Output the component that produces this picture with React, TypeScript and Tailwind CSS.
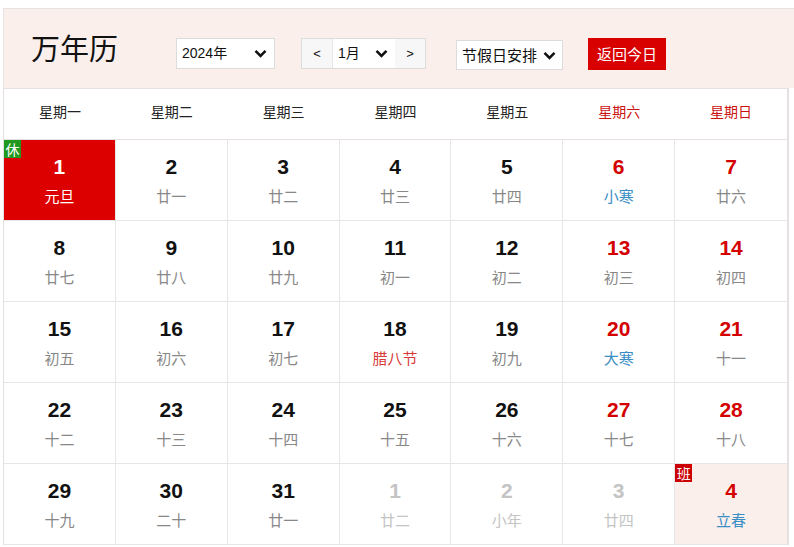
import React from "react";

type Cell = {
  d: number;
  l: string;
  kind?: "term" | "fest" | "hol";
  other?: boolean;
  badge?: "休" | "班";
  today?: boolean;
  hl?: boolean;
};

const rows: Cell[][] = [
  [
    { d: 1, l: "元旦", kind: "hol", badge: "休", today: true },
    { d: 2, l: "廿一" },
    { d: 3, l: "廿二" },
    { d: 4, l: "廿三" },
    { d: 5, l: "廿四" },
    { d: 6, l: "小寒", kind: "term" },
    { d: 7, l: "廿六" },
  ],
  [
    { d: 8, l: "廿七" },
    { d: 9, l: "廿八" },
    { d: 10, l: "廿九" },
    { d: 11, l: "初一" },
    { d: 12, l: "初二" },
    { d: 13, l: "初三" },
    { d: 14, l: "初四" },
  ],
  [
    { d: 15, l: "初五" },
    { d: 16, l: "初六" },
    { d: 17, l: "初七" },
    { d: 18, l: "腊八节", kind: "fest" },
    { d: 19, l: "初九" },
    { d: 20, l: "大寒", kind: "term" },
    { d: 21, l: "十一" },
  ],
  [
    { d: 22, l: "十二" },
    { d: 23, l: "十三" },
    { d: 24, l: "十四" },
    { d: 25, l: "十五" },
    { d: 26, l: "十六" },
    { d: 27, l: "十七" },
    { d: 28, l: "十八" },
  ],
  [
    { d: 29, l: "十九" },
    { d: 30, l: "二十" },
    { d: 31, l: "廿一" },
    { d: 1, l: "廿二", other: true },
    { d: 2, l: "小年", other: true },
    { d: 3, l: "廿四", other: true },
    { d: 4, l: "立春", kind: "term", badge: "班", hl: true },
  ],
];

const weekdays = ["星期一", "星期二", "星期三", "星期四", "星期五", "星期六", "星期日"];

const Chevron = () => (
  <svg width="13" height="9" viewBox="0 0 13 9" className="shrink-0">
    <polyline points="1.5,1.8 6.5,6.8 11.5,1.8" fill="none" stroke="#111" strokeWidth="2.6" />
  </svg>
);

const cjk = { fontFamily: '"Noto Sans CJK SC", sans-serif' };

export default function App() {
  const font = { fontFamily: '"Liberation Sans", "Noto Sans CJK SC", sans-serif' };
  return (
    <div className="bg-white w-[794px] h-[547px] overflow-hidden pt-[8px] pl-[3px]" style={font}>
      {/* header */}
      <div className="h-[80px] bg-[#fbefec] border-t border-l border-[#e8e2e0] flex items-start">
        <div className="ml-[27px] mt-[24px] text-[29px] text-[#111] leading-none" style={cjk}>
          万年历
        </div>
        <div className="ml-[58px] mt-[29px] w-[99px] h-[31px] bg-white border border-[#dcdcdc] flex items-center justify-between pl-[5px] pr-[7px] text-[14px] text-[#111]">
          <span>2024年</span>
          <Chevron />
        </div>
        <div className="ml-[26px] mt-[29px] h-[31px] flex border border-[#dcdcdc] text-[14px] text-[#111]">
          <div className="w-[30px] bg-[#f7f7f7] flex items-center justify-center text-[13px]">&lt;</div>
          <div className="w-[63px] bg-white flex items-center justify-between pl-[5px] pr-[7px] border-l border-[#e6e6e6]">
            <span>1月</span>
            <Chevron />
          </div>
          <div className="w-[30px] bg-[#f7f7f7] flex items-center justify-center text-[13px]">&gt;</div>
        </div>
        <div
          className="ml-[30px] mt-[31px] w-[107px] h-[30px] bg-white border border-[#dcdcdc] flex items-center justify-between pl-[5px] pr-[6px] text-[15px] text-[#111]"
          style={cjk}
        >
          <span>节假日安排</span>
          <Chevron />
        </div>
        <div
          className="ml-[25px] mt-[29px] w-[78px] h-[32px] bg-[#d90000] text-white flex items-center justify-center text-[15px]"
          style={cjk}
        >
          返回今日
        </div>
      </div>
      {/* body */}
      <div className="w-[786px] border-l border-r-2 border-[#e6e1e1] bg-white">
        <div className="grid grid-cols-7 h-[52px] border-t border-b border-[#e8e0de] pb-[6px]">
          {weekdays.map((w, i) => (
            <div
              key={w}
              className={`flex items-center justify-center text-[14px] ${i >= 5 ? "text-[#cc1111]" : "text-[#222]"}`}
              style={cjk}
            >
              {w}
            </div>
          ))}
        </div>
        {rows.map((r, ri) => (
          <div key={ri} className="grid grid-cols-7">
            {r.map((c, ci) => {
              const weekend = ci >= 5;
              const bg = c.today ? "bg-[#dd0000]" : c.hl ? "bg-[#fbefec]" : "bg-white";
              const numColor = c.today
                ? "text-white"
                : c.other
                ? "text-[#c4c4c4]"
                : weekend
                ? "text-[#d40000]"
                : "text-[#111]";
              const lunarColor = c.today
                ? "text-white"
                : c.other
                ? "text-[#c4c4c4]"
                : c.kind === "term"
                ? "text-[#3a8ec4]"
                : c.kind === "fest"
                ? "text-[#d83a3a]"
                : "text-[#888]";
              return (
                <div
                  key={ci}
                  className={`relative h-[81px] border-b border-r border-[#e6e6e6] ${ci === 6 ? "border-r-0" : ""} ${bg} flex flex-col items-center pt-[14px]`}
                >
                  {c.badge && (
                    <div
                      className={`absolute left-0 top-0 w-[17px] h-[18px] flex items-center justify-center text-white text-[14px] leading-none ${
                        c.badge === "休" ? "bg-[#1f9a1f]" : "bg-[#cc0000]"
                      }`}
                      style={cjk}
                    >
                      {c.badge}
                    </div>
                  )}
                  <div className={`text-[21px] font-bold leading-[26px] ${numColor}`}>{c.d}</div>
                  <div className={`text-[15px] leading-[20px] mt-[6px] ${lunarColor}`} style={cjk}>
                    {c.l}
                  </div>
                </div>
              );
            })}
          </div>
        ))}
      </div>
    </div>
  );
}
